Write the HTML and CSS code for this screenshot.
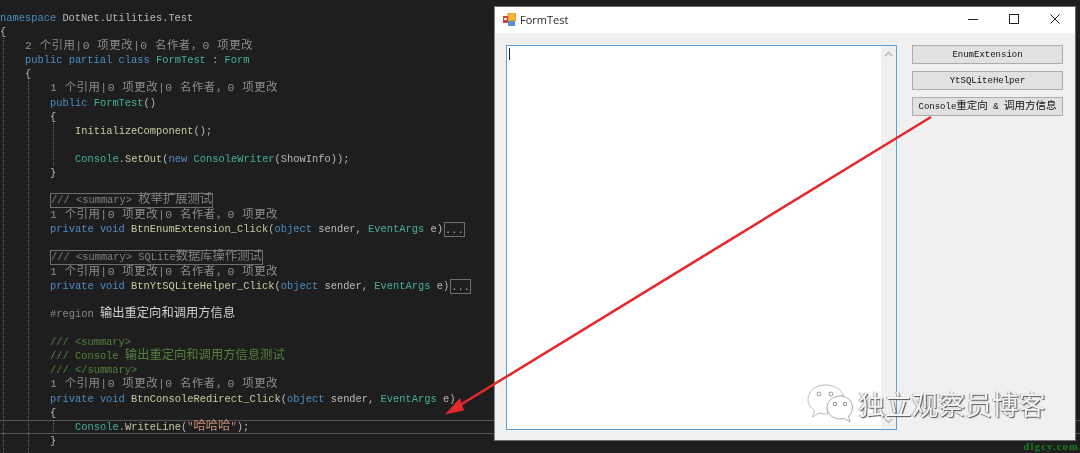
FILE: index.html
```html
<!DOCTYPE html>
<html lang="zh-CN">
<head>
<meta charset="utf-8">
<title>FormTest</title>
<link rel="stylesheet" href="styles.css">
</head>
<body>
<div class="desktop">
  <main class="editor">
    <span class="guide g1"></span><span class="guide g2"></span><span class="guide g3"></span><span class="guide g4"></span>
    <div class="line"><span class="kw">namespace</span> <span class="plain">DotNet.Utilities.Test</span></div>
    <div class="line"><span class="plain">{</span></div>
    <div class="line i1 lens">2 个引用|0 项更改|0 名作者，0 项更改</div>
    <div class="line i1"><span class="kw">public partial class</span> <span class="ty">FormTest</span> <span class="plain">:</span> <span class="ty">Form</span></div>
    <div class="line i1"><span class="plain">{</span></div>
    <div class="line i2 lens">1 个引用|0 项更改|0 名作者，0 项更改</div>
    <div class="line i2"><span class="kw">public</span> <span class="ty">FormTest</span><span class="plain">()</span></div>
    <div class="line i2"><span class="plain">{</span></div>
    <div class="line i3"><span class="fn">InitializeComponent</span><span class="plain">();</span></div>
    <div class="line"></div>
    <div class="line i3"><span class="ty">Console</span><span class="plain">.</span><span class="fn">SetOut</span><span class="plain">(</span><span class="kw">new</span> <span class="ty">ConsoleWriter</span><span class="plain">(ShowInfo));</span></div>
    <div class="line i2"><span class="plain">}</span></div>
    <div class="line"></div>
    <div class="line i2"><span class="fold">/// &lt;summary&gt; <span class="cjk">枚举扩展测试</span></span></div>
    <div class="line i2 lens">1 个引用|0 项更改|0 名作者，0 项更改</div>
    <div class="line i2"><span class="kw">private void</span> <span class="fn">BtnEnumExtension_Click</span><span class="plain">(</span><span class="kw">object</span> <span class="plain">sender,</span> <span class="ty">EventArgs</span> <span class="plain">e)</span><span class="dots">...</span></div>
    <div class="line"></div>
    <div class="line i2"><span class="fold">/// &lt;summary&gt; SQLite<span class="cjk">数据库操作测试</span></span></div>
    <div class="line i2 lens">1 个引用|0 项更改|0 名作者，0 项更改</div>
    <div class="line i2"><span class="kw">private void</span> <span class="fn">BtnYtSQLiteHelper_Click</span><span class="plain">(</span><span class="kw">object</span> <span class="plain">sender,</span> <span class="ty">EventArgs</span> <span class="plain">e)</span><span class="dots">...</span></div>
    <div class="line"></div>
    <div class="line i2"><span class="region">#region</span> <span class="cjk plain-cjk">输出重定向和调用方信息</span></div>
    <div class="line"></div>
    <div class="line i2 cm">/// &lt;summary&gt;</div>
    <div class="line i2 cm">/// Console <span class="cjk">输出重定向和调用方信息测试</span></div>
    <div class="line i2 cm">/// &lt;/summary&gt;</div>
    <div class="line i2 lens">1 个引用|0 项更改|0 名作者，0 项更改</div>
    <div class="line i2"><span class="kw">private void</span> <span class="fn">BtnConsoleRedirect_Click</span><span class="plain">(</span><span class="kw">object</span> <span class="plain">sender,</span> <span class="ty">EventArgs</span> <span class="plain">e)</span></div>
    <div class="line i2"><span class="plain">{</span></div>
    <div class="line i3 current"><span class="ty">Console</span><span class="plain">.</span><span class="fn">WriteLine</span><span class="plain">(</span><span class="str">"<span class="cjk">哈哈哈</span>"</span><span class="plain">);</span></div>
    <div class="line i2"><span class="plain">}</span></div>
  </main>

  <section class="window">
    <header class="titlebar">
      <svg class="appicon" width="13" height="13" viewBox="0 0 13 13" aria-hidden="true">
        <rect x="0" y="3" width="6" height="7" fill="#c9453c"/>
        <rect x="5" y="0" width="8" height="8" fill="#f2b632" stroke="#a8802a" stroke-width=".6"/>
        <rect x="5" y="8" width="7" height="5" fill="#5b8fd6"/>
        <rect x="1" y="5" width="3" height="2" fill="#eee"/>
      </svg>
      <span class="title">FormTest</span>
      <div class="controls">
        <svg width="12" height="12" viewBox="0 0 12 12" aria-hidden="true"><path d="M1 6.5h10" stroke="#222" fill="none"/></svg>
        <svg width="12" height="12" viewBox="0 0 12 12" aria-hidden="true"><rect x="1.5" y="1.5" width="9" height="9" stroke="#222" fill="none"/></svg>
        <svg width="12" height="12" viewBox="0 0 12 12" aria-hidden="true"><path d="M1.5 1.5l9 9M10.5 1.5l-9 9" stroke="#222" fill="none"/></svg>
      </div>
    </header>
    <div class="formbody">
      <div class="textbox">
        <div class="textarea"><span class="caret"></span></div>
        <div class="scrollbar">
          <svg width="9" height="6" viewBox="0 0 9 6" aria-hidden="true"><path d="M1 5l3.5-3.5L8 5" stroke="#b9b9b9" stroke-width="1.5" fill="none"/></svg>
          <svg width="9" height="6" viewBox="0 0 9 6" aria-hidden="true"><path d="M1 1l3.5 3.5L8 1" stroke="#b9b9b9" stroke-width="1.5" fill="none"/></svg>
        </div>
      </div>
      <div class="buttons">
        <button class="btn">EnumExtension</button>
        <button class="btn">YtSQLiteHelper</button>
        <button class="btn">Console<span class="btncjk">重定向</span> &amp; <span class="btncjk">调用方信息</span></button>
      </div>
    </div>
  </section>

  <svg class="arrow" width="1080" height="453" viewBox="0 0 1080 453" aria-hidden="true">
    <path d="M931 117L456 407.5" stroke="#e6282e" stroke-width="2.6" fill="none"/>
    <path d="M445 414.500L460 398L464 410.500Z" fill="#e6282e"/>
  </svg>

  <div class="watermark">
    <svg width="46" height="40" viewBox="0 0 46 40" aria-hidden="true">
      <path d="M18 1C8.500 1 1 7.500 1 15.500c0 4.500 2.500 8.500 6.500 11L5.500 33l6.500-4c2 .6 4 1 6 1 1 0 2 0 3-.2-.5-1.300-.8-2.800-.8-4.300 0-7.500 7-13.500 15.500-13.500.3 0 .6 0 .9 0C35 5.500 27.500 1 18 1z" fill="#fff" fill-opacity=".85" stroke="#aaa" stroke-width=".8"/>
      <path d="M33 12c-7 0-13 5-13 11.500S26 35 33 35c1.500 0 3-.3 4.300-.7L43 38l-1.500-6c2.500-2 4-5 4-8.500C45.500 17 40 12 33 12z" fill="#fff" fill-opacity=".9" stroke="#999" stroke-width=".8"/>
      <circle cx="12" cy="10" r="2" fill="none" stroke="#999"/>
      <circle cx="24" cy="10" r="2" fill="none" stroke="#999"/>
      <circle cx="28" cy="20" r="1.800" fill="none" stroke="#888"/>
      <circle cx="38" cy="20" r="1.800" fill="none" stroke="#888"/>
    </svg>
    <span class="wmtext">独立观察员博客</span>
  </div>
  <span class="site">dlgcy.com</span>
</div>
</body>
</html>
```
FILE: styles.css
```css
* { box-sizing: border-box; }
html, body { margin: 0; padding: 0; }
body { width: 1080px; height: 453px; overflow: hidden; background: #1e1e1e; }

.desktop { position: relative; width: 1080px; height: 453px; overflow: hidden; filter: blur(.35px); }

.editor {
  padding-top: 11px;
  height: 453px;
  font-family: "Liberation Mono", "Noto Sans CJK SC", monospace;
  font-size: 10.4px;
  color: #b4b4b4;
}
.line { height: 14.1px; line-height: 14.1px; white-space: pre; }
.i1 { padding-left: 25px; }
.i2 { padding-left: 50px; }
.i3 { padding-left: 75px; }

.kw { color: #4d8cc2; }
.ty { color: #45b09a; }
.fn { color: #c9c9a0; }
.plain { color: #b8b8b8; }
.cm { color: #55803f; }
.str { color: #c98e74; }
.region { color: #8a8a8a; }
.plain-cjk { color: #d0d0d0; }
.cjk { font-family: "Noto Sans CJK SC", sans-serif; font-size: 12.3px; line-height: 0; }
.lens { color: #8e8e8e; font-size: 11.400px; letter-spacing: .5px; }

.fold {
  display: inline-block;
  height: 15px;
  line-height: 13px;
  margin-top: -1px;
  vertical-align: top;
  border: 1px solid #6e6e6e;
  color: #808080;
}
.dots {
  display: inline-block;
  width: 21px;
  height: 15px;
  line-height: 14px;
  margin-left: 1px;
  border: 1px solid #6e6e6e;
  color: #aaa;
  text-align: center;
  vertical-align: top;
}
.current {
  height: 14.1px;
  line-height: 12.1px;
  border-top: 1px solid #555;
  border-bottom: 1px solid #555;
}

.guide { position: absolute; width: 0; border-left: 1px dotted #666; }
.g1 { left: 3px; top: 38px; height: 415px; }
.g2 { left: 28px; top: 81px; height: 372px; }
.g3 { left: 53px; top: 123px; height: 43px; }
.g4 { left: 53px; top: 420px; height: 14px; }

.window {
  position: absolute;
  left: 494px;
  top: 6px;
  width: 582px;
  height: 435px;
  display: flex;
  flex-direction: column;
  background: #f0f0f0;
  border: 1px solid #6b6b6b;
  border-left-color: #8a8a8a;
}
.titlebar {
  height: 26px;
  flex: none;
  display: flex;
  align-items: center;
  padding: 0 0 2px 8px;
  background: #fff;
  font-family: "Open Sans", "Noto Sans", sans-serif;
  font-size: 11px;
  color: #2b2b2b;
}
.appicon { flex: none; }
.title { margin-left: 4px; }
.controls {
  margin-left: auto;
  display: flex;
  align-items: center;
  gap: 29px;
  padding-right: 14px;
}
.formbody {
  flex: 1;
  display: flex;
  align-items: flex-start;
  padding: 12px 12px 0 11px;
}
.textbox {
  width: 391px;
  height: 385px;
  flex: none;
  display: flex;
  border: 1px solid #5ba3dd;
  background: #fff;
}
.textarea { flex: 1; padding: 2px 0 0 2px; }
.caret { display: block; width: 1px; height: 12px; background: #222; }
.scrollbar {
  width: 15px;
  flex: none;
  display: flex;
  flex-direction: column;
  justify-content: space-between;
  align-items: center;
  padding: 5px 0;
  background: #f0f0f0;
}
.buttons {
  margin-left: 15px;
  display: flex;
  flex-direction: column;
  gap: 7px;
}
.btn {
  width: 151px;
  height: 19px;
  padding: 0;
  border: 1px solid #adadad;
  background: #e1e1e1;
  font-family: "Liberation Mono", "Noto Sans CJK SC", monospace;
  font-size: 9px;
  line-height: 16px;
  color: #111;
  white-space: nowrap;
}
.btncjk { font-family: "Noto Sans CJK SC", sans-serif; font-size: 10.500px; line-height: 0; }

.arrow { position: absolute; left: 0; top: 0; pointer-events: none; }

.watermark {
  position: absolute;
  left: 807px;
  top: 384px;
  display: flex;
  align-items: center;
  gap: 5px;
}
.wmtext {
  font-family: "Noto Sans CJK SC", sans-serif;
  font-size: 26.800px;
  line-height: 38px;
  color: #f4f4f4;
  text-shadow: 1px 1px 1px #555, -1px 0 1px #aaa;
}
.site {
  position: absolute;
  right: 1px;
  bottom: 0;
  font-family: "Liberation Serif", serif;
  font-size: 10.500px;
  font-weight: bold;
  line-height: 12px;
  letter-spacing: 1.200px;
  color: #15801a;
}
```
